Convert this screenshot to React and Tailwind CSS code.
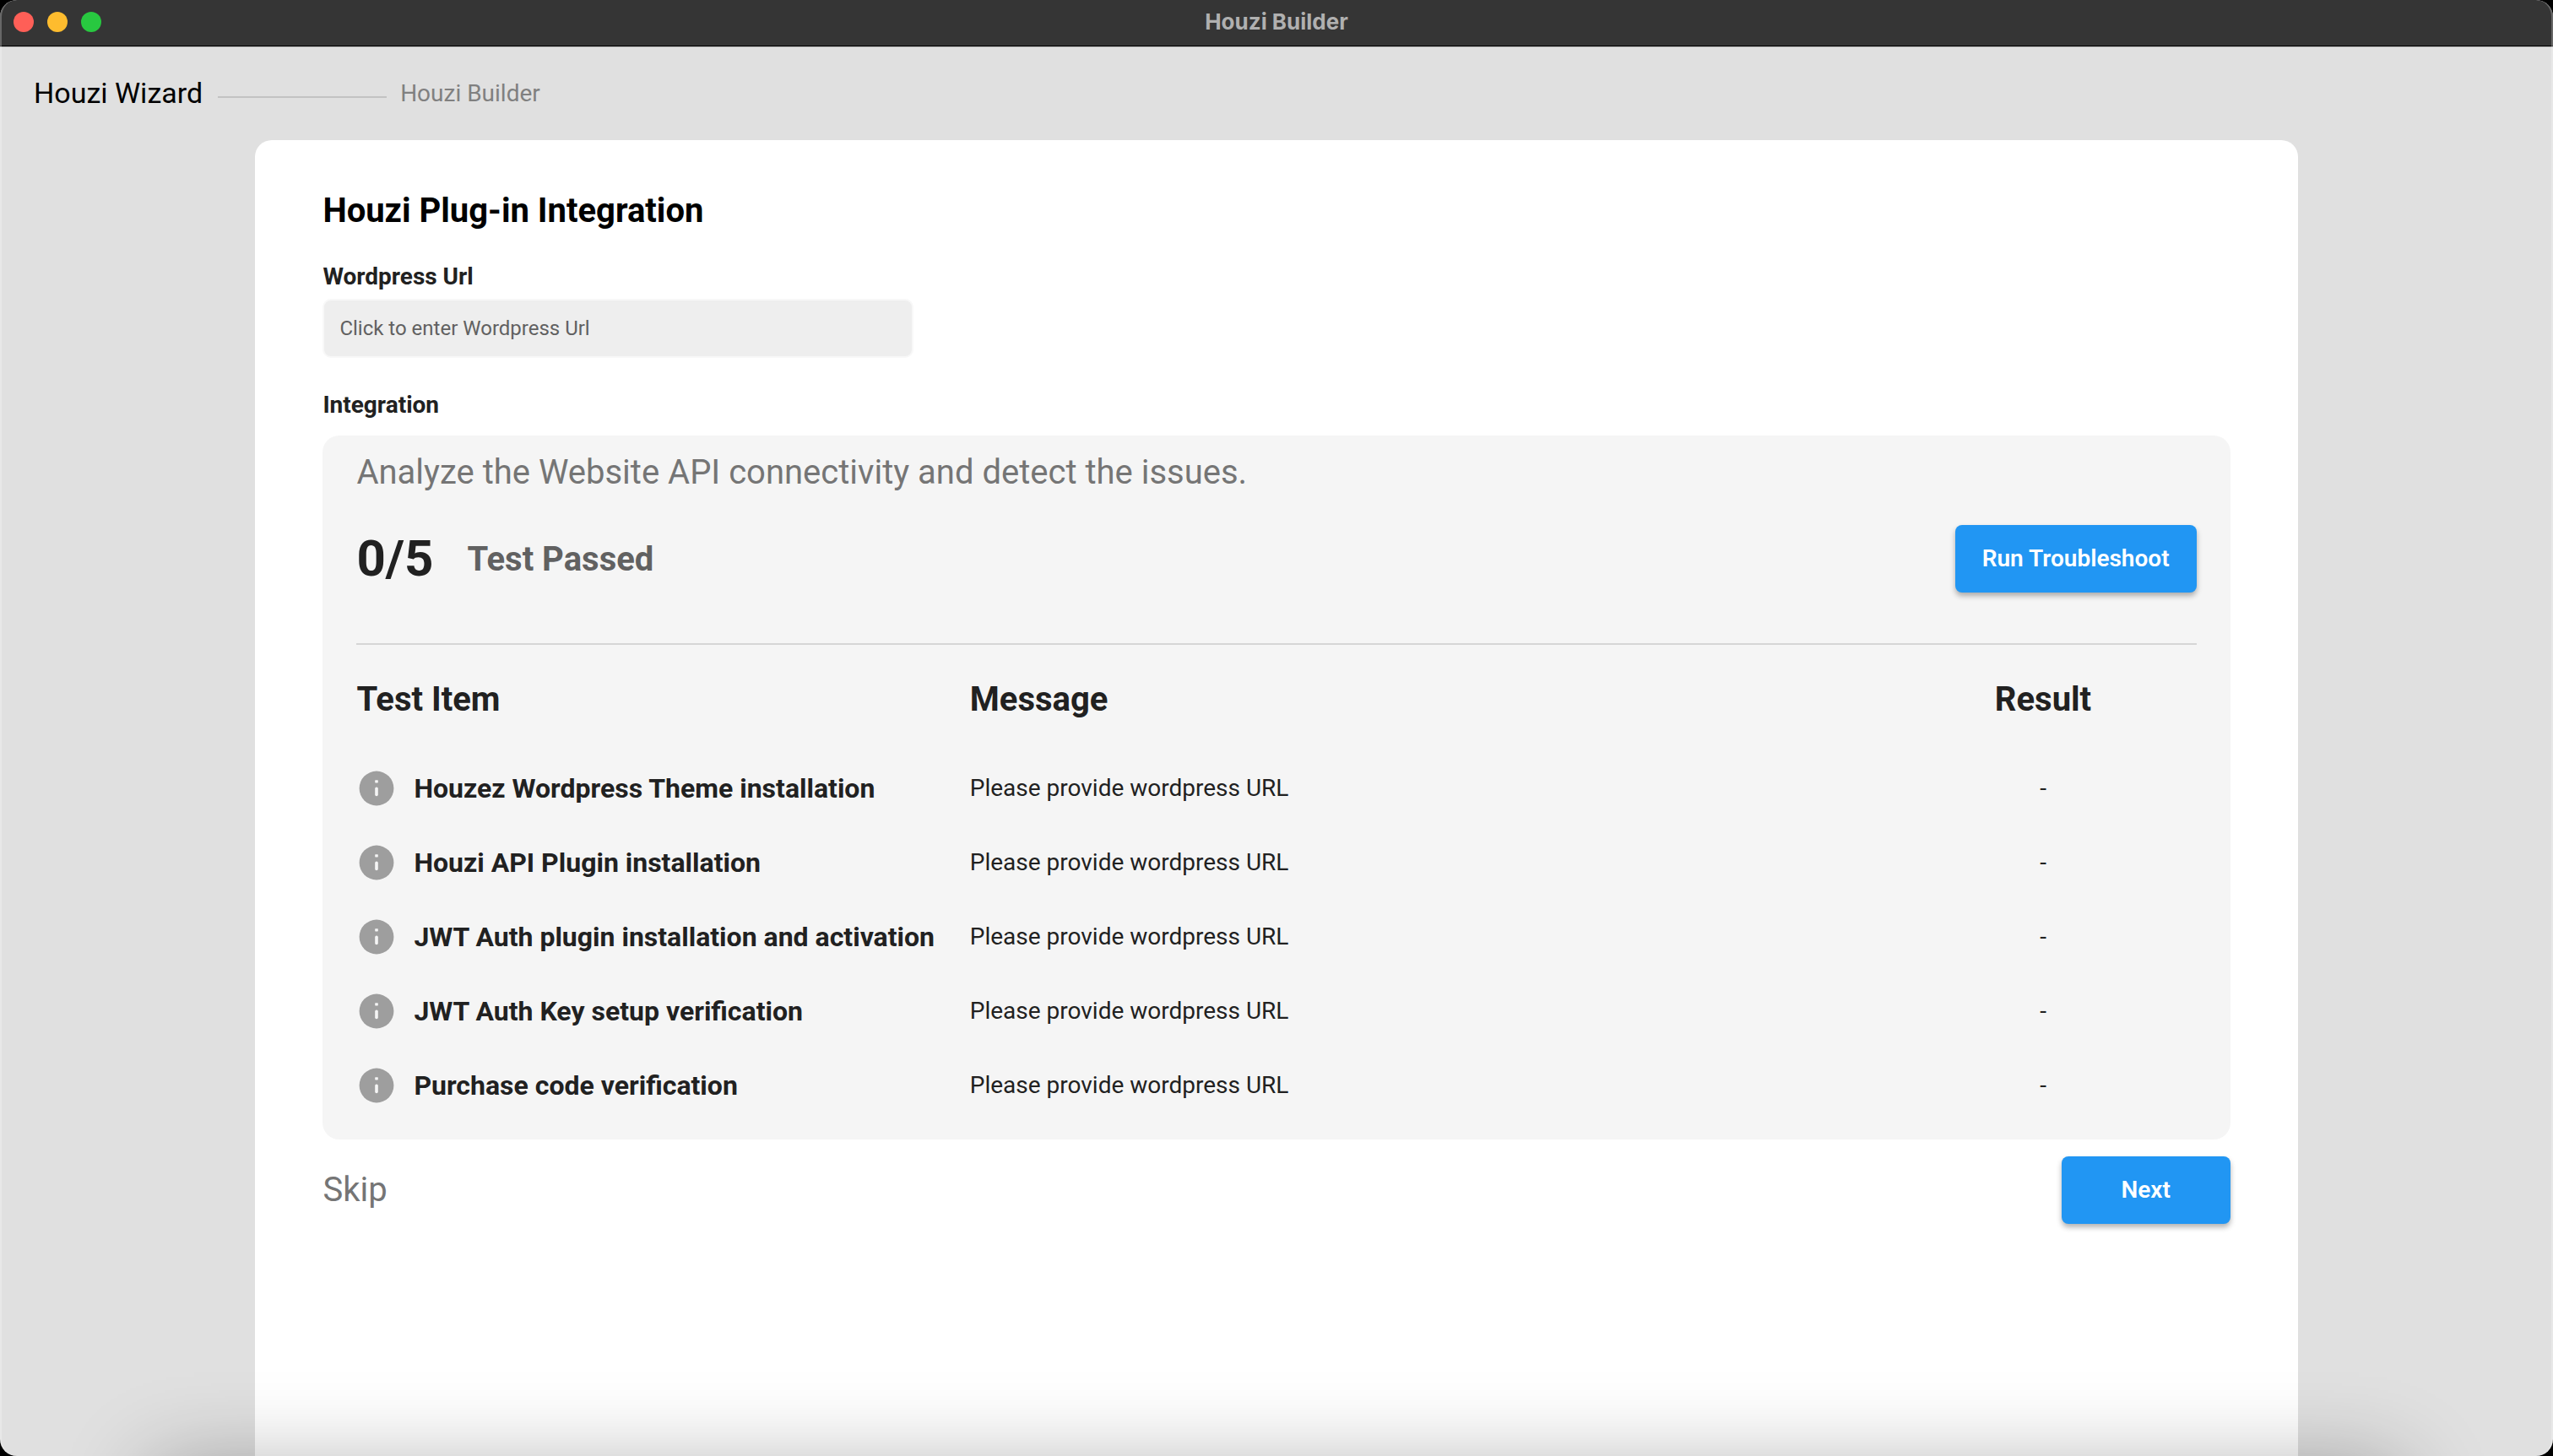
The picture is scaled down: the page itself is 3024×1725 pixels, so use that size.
import React from "react";

const TESTS = [
  "Houzez Wordpress Theme installation",
  "Houzi API Plugin installation",
  "JWT Auth plugin installation and activation",
  "JWT Auth Key setup verification",
  "Purchase code verification",
];

function InfoIcon() {
  return (
    <svg viewBox="0 0 24 24" className="size-12 shrink-0" aria-hidden="true">
      <circle cx="12" cy="12" r="10.2" fill="#9e9e9e" />
      <rect x="11.1" y="7.1" width="1.8" height="1.6" rx="0.3" fill="#f5f5f5" />
      <rect x="11.1" y="11.2" width="1.8" height="5.4" rx="0.9" fill="#f5f5f5" />
    </svg>
  );
}

function TitleBar() {
  return (
    <header className="grid h-[55px] grid-cols-[1fr_auto_1fr] items-center border-b border-black bg-[#353535] px-4 pb-0.5">
      <div className="flex gap-4">
        <button aria-label="Close" className="size-6 rounded-full bg-[#ff5f57]" />
        <button aria-label="Minimize" className="size-6 rounded-full bg-[#febc2e]" />
        <button aria-label="Zoom" className="size-6 rounded-full bg-[#28c840]" />
      </div>
      <h1 className="font-[Inter,sans-serif] text-[26px] leading-8 font-bold text-[#b0b0b0]">Houzi Builder</h1>
    </header>
  );
}

function Breadcrumb() {
  return (
    <nav className="flex h-[111px] items-center border-t border-[#b4b4b4] px-10">
      <a href="#wizard" className="pb-0.5 text-[34px] leading-10 text-black">Houzi Wizard</a>
      <span className="mt-2 mr-4 ml-[18px] h-0.5 w-[200px] bg-[#c2c2c2]" />
      <a href="#builder" className="text-[28px] leading-9 text-[#808080]">Houzi Builder</a>
    </nav>
  );
}

const button =
  "h-20 rounded-lg bg-[#2196f3] text-[28px] leading-9 font-semibold text-white shadow-[0_4px_6px_rgba(0,0,0,0.3)]";

function Diagnostics() {
  return (
    <section className="mt-[18px] rounded-[20px] bg-[#f5f5f5] px-10 py-5">
      <p className="text-[40px] leading-12 text-[#757575]">
        Analyze the Website API connectivity and detect the issues.
      </p>
      <div className="mt-[38px] flex items-center border-b-2 border-[#d6d6d6] pb-[60px]">
        <span className="text-[60px] leading-20 font-bold">0/5</span>
        <span className="ml-10 pt-0.5 text-[40px] leading-12 font-bold text-[#616161]">Test Passed</span>
        <button className={`${button} ml-auto px-8`}>Run Troubleshoot</button>
      </div>
      <table className="w-full table-fixed">
        <colgroup>
          <col className="w-1/3" />
          <col className="w-1/2" />
          <col className="w-1/6" />
        </colgroup>
        <thead>
          <tr className="h-[126px] text-[40px] leading-12">
            <th className="pt-1 text-left">Test Item</th>
            <th className="pt-1 text-left">Message</th>
            <th className="pt-1">Result</th>
          </tr>
        </thead>
        <tbody>
          {TESTS.map((name) => (
            <tr key={name} className="h-22 text-[28px] leading-9">
              <th className="text-left text-[32px] leading-10">
                <span className="flex items-center gap-5">
                  <InfoIcon />
                  {name}
                </span>
              </th>
              <td>Please provide wordpress URL</td>
              <td className="text-center">-</td>
            </tr>
          ))}
        </tbody>
      </table>
    </section>
  );
}

export default function App() {
  return (
    <div className="bg-black">
      <div className="relative flex min-h-screen flex-col overflow-hidden rounded-[20px] bg-[#e0e0e0] font-[Roboto,sans-serif] text-[#212121]">
        <TitleBar />
        <Breadcrumb />
        <main className="mx-[10%] flex-1 rounded-t-[20px] bg-white px-20 pt-[60px]">
          <h2 className="text-[40px] leading-12 font-bold text-black">Houzi Plug-in Integration</h2>
          <label htmlFor="url" className="mt-9 block text-[28px] leading-9 font-bold">Wordpress Url</label>
          <input
            id="url"
            placeholder="Click to enter Wordpress Url"
            className="mt-2 block h-[70px] w-[700px] rounded-[10px] border-2 border-[#f8f8f8] bg-[#eeeeee] px-[18px] text-[24px] outline-none placeholder:text-[#616161]"
          />
          <h3 className="mt-[38px] text-[28px] leading-9 font-bold">Integration</h3>
          <Diagnostics />
          <div className="mt-5 flex items-center justify-between">
            <button className="text-[40px] leading-12 text-[#757575]">Skip</button>
            <button className={`${button} w-[200px]`}>Next</button>
          </div>
        </main>
        <div className="pointer-events-none absolute inset-x-[180px] top-full h-[400px] shadow-[0_15px_100px_rgba(0,0,0,0.33)]" />
        <div className="pointer-events-none absolute inset-0 rounded-[20px] border-x-2 border-white/25" />
      </div>
    </div>
  );
}
